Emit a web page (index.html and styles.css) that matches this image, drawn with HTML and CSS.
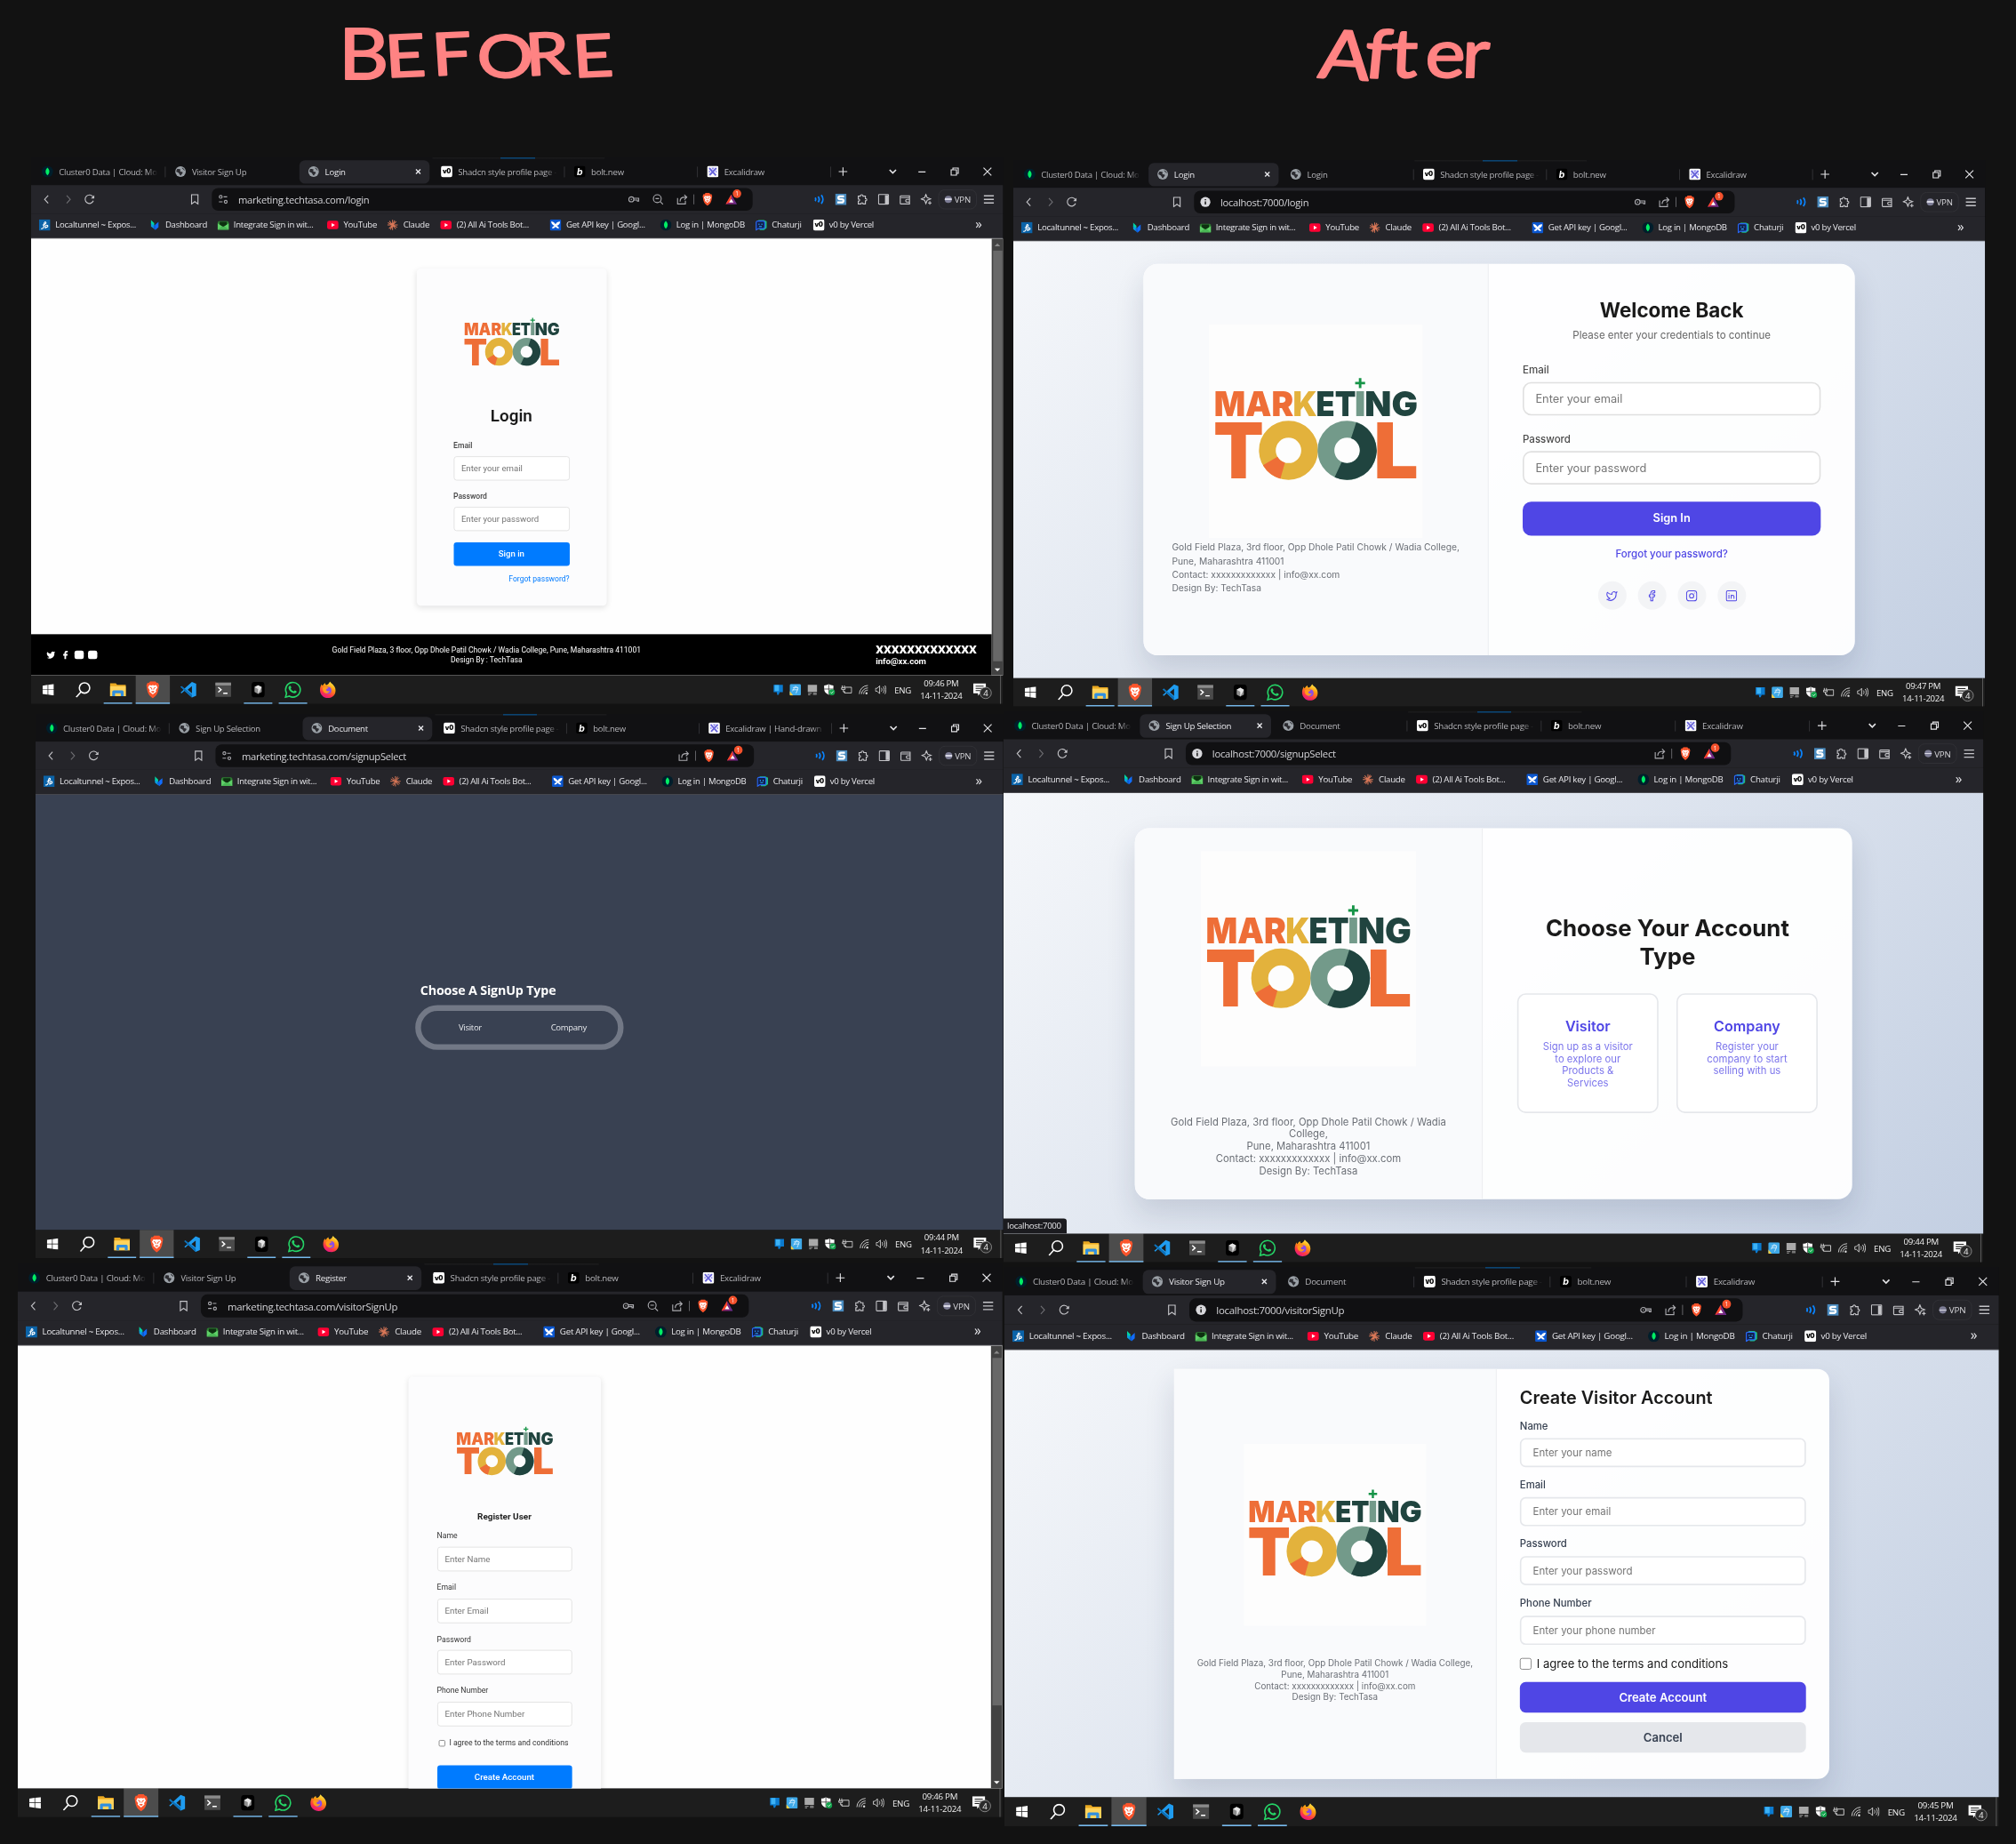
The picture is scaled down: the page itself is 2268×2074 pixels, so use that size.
FILE: index.html
```html
<!DOCTYPE html>
<html lang="en">
<head>
<meta charset="utf-8">
<title>Before / After</title>
<link rel="stylesheet" href="styles.css">
</head>
<body>
<svg class="sprite" aria-hidden="true">
  <defs>
    <linearGradient id="g-fox" x1=".8" y1="0" x2=".3" y2="1"><stop offset="0" stop-color="#fff44f"/><stop offset=".4" stop-color="#ff980e"/><stop offset=".75" stop-color="#ff3647"/><stop offset="1" stop-color="#e31587"/></linearGradient>
    <linearGradient id="g-tri" x1="0" y1="1" x2="1" y2="1"><stop offset="0" stop-color="#9e1f63"/><stop offset="1" stop-color="#662d91"/></linearGradient>
  </defs>
  <symbol id="mongo" viewBox="0 0 16 16"><circle cx="8" cy="8" r="8" fill="#001e2b"/><path d="M8 2.400c2 2 2.600 3.600 2.600 5.600S9.600 11.600 8 13.200C6.400 11.600 5.400 10 5.400 8S6 4.400 8 2.400z" fill="#00ed64"/></symbol>
  <symbol id="globe" viewBox="0 0 16 16"><circle cx="8" cy="8" r="7.400" fill="#9aa0a6"/><path d="M3 4.500c2-.5 3 .5 4.500 0 1 1.500-1 2.500.5 3.500 1.500.5 3 0 3 1.500S9 12 8.500 13.500C6.500 13 6.500 10.500 5 9.500S2 9 2 7.500zM10 2.500c0 1.500 1 2 2.500 3 .5 1.500 1 1 1.300 1-.5-2-2-3.500-3.800-4z" fill="#2b2b30"/></symbol>
  <symbol id="v0" viewBox="0 0 16 16"><rect width="16" height="16" rx="3" fill="#fff"/><text x="8" y="11" text-anchor="middle" class="mark" font-size="9" textLength="11.500" lengthAdjust="spacingAndGlyphs">v0</text></symbol>
  <symbol id="bolt" viewBox="0 0 16 16"><rect width="16" height="16" rx="3.500" fill="#000"/><text x="8" y="12.500" text-anchor="middle" class="mark mark-b" font-size="13">b</text></symbol>
  <symbol id="excali" viewBox="0 0 16 16"><rect width="16" height="16" rx="2.500" fill="#fff"/><path d="M3 3l9.500 10.500M13 3L3.500 13" stroke="#6965db" stroke-width="2.400"/><path d="M6 2.500h4.500L8 5.500zM2.500 6v4L5 8zM13.500 6v4L11 8z" fill="#8f8cf0"/></symbol>
  <symbol id="tunnel" viewBox="0 0 16 16"><rect width="16" height="16" fill="#0b63a8"/><path d="M3 13c2 1 4-1 4-4S8 2.500 9.500 4 8 8 5 8m4 5V9.500c0-1.500 3.500-2 3.500 0S10 11.500 9 11.500" fill="none" stroke="#fff" stroke-width="1.400"/></symbol>
  <symbol id="dash" viewBox="0 0 16 16"><path d="M2.500 1L7 5.500V10L2.500 7z" fill="#00d6a1"/><path d="M2.500 5.500L8 9.500 7.500 14 2.500 10z" fill="#0aa0e0"/><path d="M8.500 7.500l4.500-4V11L8.500 15z" fill="#116dff"/><path d="M6 9l3-1v7l-3-2.500z" fill="#0d5fd8"/></symbol>
  <symbol id="mail" viewBox="0 0 16 16"><path d="M0 4l2-1.500h12L16 4v10.500H0z" fill="#2e7d32"/><path d="M3 3.500h10v4L8 11 3 7.500z" fill="#0d3010"/><path d="M0 5.500L8 11l8-5.500v9H0z" fill="#5fd068"/><path d="M0 14.500l6-4.500h4l6 4.500z" fill="#49b654"/></symbol>
  <symbol id="yt" viewBox="0 0 16 16"><rect y="2" width="16" height="12" rx="3" fill="#ff0033"/><path d="M6.300 5.300L11 8l-4.700 2.700z" fill="#fff"/></symbol>
  <symbol id="claude" viewBox="0 0 16 16"><path d="M8 .8V15.200M.8 8H15.200M3.500 2.500L12.500 13.500M13 3L3 13M1.500 4.800L14.500 11.200M11 1.500L5 14.500" stroke="#d97757" stroke-width="1.250"/></symbol>
  <symbol id="api" viewBox="0 0 16 16"><rect width="16" height="16" rx="2" fill="#0b57d0"/><path d="M2 3c2 0 4 1.500 6 4 2-3 4-4 6.500-3.500C14 7 12 8.500 9.500 9c1.500 1 3 1.500 3.500 3.500C11 13 9 12 8 10c-1 2-2.500 3-5 2.500.5-1.500 1.500-2.500 3.500-3.300C3.500 8 2 6 2 3z" fill="#fff"/></symbol>
  <symbol id="chat" viewBox="0 0 16 16"><path d="M4 1h8l4 2v9l-4 3H6z" fill="#1bbf83"/><path d="M3 2.500h8a2 2 0 012 2V11a2 2 0 01-2 2H4l-3 2V4.500a2 2 0 012-2z" fill="#101f4d" stroke="#2a68f5" stroke-width="1.500"/><path d="M5 6v2M9 6v2M5 10h4" stroke="#2fa3f7" stroke-width="1.300"/></symbol>

  <symbol id="back" viewBox="0 0 16 16"><path d="M10 2.500L5 8l5 5.500" class="ln"/></symbol>
  <symbol id="fwd" viewBox="0 0 16 16"><path d="M6 2.500L11 8l-5 5.500" class="ln"/></symbol>
  <symbol id="reload" viewBox="0 0 16 16"><path d="M13.500 10A6 6 0 1113 4.500" class="ln"/><path d="M10 6.800h4.800V2.200z" fill="currentColor"/></symbol>
  <symbol id="bmark" viewBox="0 0 16 16"><path d="M3.500 1.500h9v13L8 11.200l-4.500 3.300z" class="ln"/></symbol>
  <symbol id="tune" viewBox="0 0 16 16"><circle cx="4.500" cy="4.500" r="2" class="ln"/><path d="M8.500 4.500h5M2 11.500h5" class="ln"/><circle cx="11.500" cy="11.500" r="2" class="ln"/></symbol>
  <symbol id="info" viewBox="0 0 16 16"><circle cx="8" cy="8" r="7" fill="#d8d8dc"/><path d="M8 7v4.500M8 4v1.600" stroke="#111" stroke-width="1.800"/></symbol>
  <symbol id="key" viewBox="0 0 16 16"><circle cx="4.500" cy="8" r="3.500" class="ln"/><circle cx="4.500" cy="8" r=".9" fill="currentColor"/><path d="M8 6.500h7v4h-2V9H8" class="ln"/></symbol>
  <symbol id="lens" viewBox="0 0 16 16"><circle cx="7" cy="7" r="5.500" class="ln"/><path d="M11 11l4 4M4.500 7h5" class="ln"/></symbol>
  <symbol id="share" viewBox="0 0 16 16"><path d="M1.500 6v8.500h11V10M5 11c0-4 2-6 6-6h3.500M11 1.500L14.500 5 11 8.500" class="ln"/></symbol>
  <symbol id="brave" viewBox="0 0 16 20"><path d="M3.500 2L5 0h6l1.500 2 1.700-.2L15.500 5l-.4 1.500c-.5 5-1.600 8.500-3.600 10.500L8 20l-3.500-3C2.500 15 1.400 11.500.900 6.500L.5 5l1.300-3.200z" fill="#fb542b"/><path d="M4 4.500l2.500.5L8 4.600l1.500.4 2.500-.5 1.500 3-2 3 .5 1.800-1.700 1.200L8 15.500l-2.300-2L4 12.300l.5-1.800-2-3z" fill="#fff"/><path d="M4.500 7.200l2 .7.500 2M11.500 7.200l-2 .7-.5 2M6.500 12h3L8 13.500z" stroke="#fb542b" stroke-width="1" fill="none"/></symbol>
  <symbol id="bat" viewBox="0 0 16 16"><path d="M8 1L0 15h16z" fill="url(#g-tri)"/><path d="M8 1L0 15l8-4.500z" fill="#ff4724"/><path d="M8 7.300L4.800 12.500h6.400z" fill="#fff"/></symbol>
  <symbol id="wave" viewBox="0 0 16 16"><path d="M2 5.500c1 1.500 1 3.500 0 5M6 4c2 2.500 2 5.500 0 8M10.500 2c3 3.500 3 8.500 0 12" fill="none" stroke="#0a84ff" stroke-width="2.300"/></symbol>
  <symbol id="sbox" viewBox="0 0 16 16"><rect width="16" height="16" fill="#4a8cc0"/><path d="M12.500 3.800H6.500a2 2 0 000 4h3a2.200 2.200 0 010 4.400H3" fill="none" stroke="#fff" stroke-width="2.900"/></symbol>
  <symbol id="puzzle" viewBox="0 0 16 16"><path d="M2.500 3.500h3c-.5-2.800 4-2.800 3.500 0h3.500V7c2.500-.5 2.500 3.500 0 3v4.500h-3.300c.2-2.300-3-2.300-2.800 0H2.500V10.500c2.500.3 2.500-3.500 0-3z" class="ln"/></symbol>
  <symbol id="panel" viewBox="0 0 16 16"><rect x="1" y="1.200" width="14" height="13.600" rx="1" class="ln"/><path d="M10 2h4.500v12H10z" fill="currentColor"/></symbol>
  <symbol id="wallet" viewBox="0 0 16 16"><path d="M14.500 5.500V3H2.500A1 1 0 001.500 4v9.500a1 1 0 001 1h12V5.500h-12M14.500 8H11a1.800 1.800 0 000 3.800h3.500" class="ln"/></symbol>
  <symbol id="spark" viewBox="0 0 16 16"><path d="M7.500 1l1.800 4.700L14 7.500 9.300 9.300 7.500 14 5.700 9.300 1 7.500l4.700-1.800z" class="ln"/><path d="M13 10.500v5M10.500 13h5" class="ln"/></symbol>
  <symbol id="menu" viewBox="0 0 16 16"><path d="M1 3h14M1 8h14M1 13h14" stroke="currentColor" stroke-width="1.700"/></symbol>
  <symbol id="x" viewBox="0 0 16 16"><path d="M2.500 2.500l11 11M13.500 2.500l-11 11" class="ln"/></symbol>
  <symbol id="xs" viewBox="0 0 16 16"><path d="M3 3l10 10M13 3L3 13" fill="none" stroke="currentColor" stroke-width="2.800"/></symbol>
  <symbol id="plus" viewBox="0 0 16 16"><path d="M8 2v12M2 8h12" class="ln"/></symbol>
  <symbol id="chev" viewBox="0 0 16 16"><path d="M3.500 5.500L8 10l4.500-4.500" fill="none" stroke="currentColor" stroke-width="2"/></symbol>
  <symbol id="min" viewBox="0 0 16 16"><path d="M3 8.500h10" class="ln"/></symbol>
  <symbol id="restore" viewBox="0 0 16 16"><path d="M3 5.500h7.500V13H3zM5.500 5.500V3H13v7.500h-2.500" class="ln"/></symbol>

  <symbol id="win" viewBox="0 0 16 16"><path d="M0 2.200l7.200-1v6.400H0zM8.100 1.100L16 0v7.600H8.100zM0 8.400h7.200v6.400l-7.200-1zM8.100 8.400H16V16l-7.900-1.100z" fill="#fff"/></symbol>
  <symbol id="search" viewBox="0 0 16 16"><circle cx="9.500" cy="6.200" r="5.300" fill="none" stroke="#fff" stroke-width="1.400"/><path d="M6 10l-5 5.600" stroke="#fff" stroke-width="1.400"/></symbol>
  <symbol id="folder" viewBox="0 0 24 24"><path d="M1 3h8l2 2h12v16H1z" fill="#e9a820"/><path d="M1 7h22v14H1z" fill="#ffd35c"/><path d="M4 21v-6a2 2 0 012-2h12a2 2 0 012 2v6h-4v-4H8v4z" fill="#2f8fe0"/></symbol>
  <symbol id="code" viewBox="0 0 24 24"><path d="M17 1l6 2.500v17L17 23 6.500 13.500 2.500 17 1 16l4.500-4L1 8l1.500-1 4 3.500zM17 7l-6 5 6 5z" fill="#1f9cf0" fill-rule="evenodd"/><path d="M1 8l1.500-1L17 18.500V23L6.500 13.500z" fill="#0b6fb8"/></symbol>
  <symbol id="term" viewBox="0 0 24 24"><path d="M1 2h22v20H1z" fill="#4b4b4b"/><path d="M1 2h22v4H1z" fill="#8b8b8b"/><path d="M5 8.500l4 3.500-4 3.500M12 17h6" fill="none" stroke="#fff" stroke-width="1.800"/></symbol>
  <symbol id="cube" viewBox="0 0 20 24"><rect width="20" height="24" rx="5" fill="#000"/><path d="M10 5l5.500 3v7.500L10 18.500l-5.500-3V8z" fill="#8e8e8e"/><path d="M4.500 8L10 5l5.500 3-5.500 10.500V11z" fill="#e6e6e6"/></symbol>
  <symbol id="wa" viewBox="0 0 24 24"><path d="M1.500 22.500L3 17A10.300 10.300 0 117 21z" fill="none" stroke="#25d366" stroke-width="2"/><path d="M8 6.500c1 0 1.200 1.500 1.600 2.500.2.700-1 1.300-.7 1.800 1 1.700 2.200 2.800 4 3.500.6.200 1.200-1.500 1.800-1.300l2.400 1.300c.3 2-1.800 3-3.500 2.700-4-1-6.800-3.600-7.800-7C5.500 8.300 6.500 6.500 8 6.500z" fill="#25d366"/></symbol>
  <symbol id="fox" viewBox="0 0 24 24"><path d="M15 .5c1 2 3 3 4.500 4.500 3 3 4 7 3 11-1.500 5-5.500 7.500-10.500 7.500C6 23.500 1 19 1 12.500 1 9 2 6.500 3.500 4c0 1.500.5 2 1 2.500C5.500 5 7 3 8.500 2.500 8.300 4 9 5 10 5.500c2-.5 3.500-2 5-5z" fill="url(#g-fox)"/><circle cx="12" cy="13" r="5" fill="#8a4be8"/><path d="M5 9c3-2 6 0 8 0-1 2-3 1.500-3.500 3 .5 2.500 3 2.500 5 1.500-1 3.500-5 4.500-7.500 2.500S4.500 11 5 9z" fill="#ff9a1c"/></symbol>
  <symbol id="t1" viewBox="0 0 16 16"><path d="M1.500 1h13v10.500H10L8.500 15h-2L6 11.500H1.500z" fill="#0b7bd0"/><path d="M3 1.500h6V10H3z" fill="#3db2f5"/></symbol>
  <symbol id="t2" viewBox="0 0 16 16"><rect width="16" height="16" rx="2" fill="#3fa9e8"/><path d="M4 10l4-7 4 2.500L9 13M4.500 5H12M4 8h8" stroke="#d9f0ff" fill="none"/><path d="M0 10l5 6H1a1 1 0 01-1-1z" fill="#ffcf3d"/></symbol>
  <symbol id="t3" viewBox="0 0 16 16"><path d="M1.500 1h13v10H1.500z" fill="#a9a9a9"/><path d="M2 13h5M9 14.500h5M2 15h3" stroke="#bbb"/><path d="M9 12h5v2.500H9z" fill="#777"/></symbol>
  <symbol id="t4" viewBox="0 0 16 16"><path d="M7 0c2 1.500 4 2 6.500 2v5c0 4-3 6.500-6.500 8C3.500 13.500.500 11 .5 7V2C3 2 5 1.500 7 0z" fill="#fff"/><path d="M7 0v15M0 7h14" stroke="#333" stroke-width="1"/><circle cx="11.500" cy="11.500" r="4.300" fill="#14a44d"/><path d="M9.500 11.500l1.500 1.500 2.500-2.800" stroke="#fff" fill="none"/></symbol>
  <symbol id="t5" viewBox="0 0 16 16"><path d="M6 4.500h9v8H5V10M2 2v3M5 2v3M1 5h5v2.500H1zM3.500 8v3H6" class="lt"/></symbol>
  <symbol id="t6" viewBox="0 0 16 16"><path d="M2 14A12 12 0 0114 2M5 14a9 9 0 019-8.500M8 14a6 6 0 016-5.500" class="lt"/><circle cx="12" cy="13" r="1.500" fill="#ddd"/></symbol>
  <symbol id="t7" viewBox="0 0 16 16"><path d="M.7 6v4H3l3.500 3.500v-11L3 6zM9 5.500c1 1.500 1 3.500 0 5M11.500 3.500c2 2.500 2 6.500 0 9M14 2c2 3.500 2 8.500 0 12" class="lt"/></symbol>
  <symbol id="note" viewBox="0 0 16 16"><path d="M0 0h16v12.500H8.500L6 15.500v-3H0z" fill="#fff"/><path d="M3 3.500h10M3 6.300h10M3 9h6" stroke="#222" stroke-width="1.200"/></symbol>

  <symbol id="twitter" viewBox="0 0 24 24"><path d="M22 4s-.7 2.100-2 3.400c1.600 10-9.400 17.300-18 11.600 2.200.1 4.400-.6 6-2C3 15.500.5 9.600 3 5c2.200 2.600 5.600 4.100 9 4-.9-4.200 4-6.600 7-3.800 1.100 0 3-1.200 3-1.200z"/></symbol>
  <symbol id="facebook" viewBox="0 0 24 24"><path d="M18 2h-3a5 5 0 00-5 5v3H7v4h3v8h4v-8h3l1-4h-4V7a1 1 0 011-1h3z"/></symbol>
  <symbol id="instagram" viewBox="0 0 24 24"><rect x="2" y="2" width="20" height="20" rx="5"/><circle cx="12" cy="12" r="4.200"/><path d="M17.500 6.500h.01"/></symbol>
  <symbol id="linkedin" viewBox="0 0 24 24"><rect x="2" y="2" width="20" height="20" rx="2.500"/><path d="M7 10.500V17M7 7v.01M11.500 17v-6.500M11.500 13.500c0-3.500 5.500-4 5.500 0V17"/></symbol>

  <symbol id="logo" viewBox="0 0 300 300">
    <g class="logo-text" font-size="48.500">
      <text x="7" y="128.300" fill="#ee6e37" textLength="112" lengthAdjust="spacingAndGlyphs">MAR</text>
      <text x="118" y="128.300" fill="#e3b23c" textLength="34" lengthAdjust="spacingAndGlyphs">K</text>
      <text x="150.500" y="128.300" fill="#20443f" textLength="56" lengthAdjust="spacingAndGlyphs">ET</text>
      <text x="204.500" y="128.300" fill="#739a8a" textLength="16" lengthAdjust="spacingAndGlyphs">I</text>
      <text x="219" y="128.300" fill="#20443f" textLength="74.500" lengthAdjust="spacingAndGlyphs">NG</text>
    </g>
    <path d="M212.500 75.500v14M205.500 82.500h14" stroke="#169447" stroke-width="3.600"/>
    <g class="logo-text" font-size="109" fill="#ee6e37">
      <text x="6" y="216.700" textLength="71" lengthAdjust="spacingAndGlyphs">T</text>
      <text x="231.500" y="216.700" textLength="63" lengthAdjust="spacingAndGlyphs">L</text>
    </g>
    <g fill="none" stroke-width="23.600">
      <circle cx="111.800" cy="177" r="29.700" stroke="#e3b23c"/>
      <path d="M86.100 191.900A29.700 29.700 0 00103.600 205.500" stroke="#ee6e37"/>
      <circle cx="194.200" cy="177" r="29.700" stroke="#739a8a"/>
      <path d="M203.400 148.760A29.700 29.700 0 11181.650 203.920" stroke="#20443f"/>
    </g>
  </symbol>
</svg>

<main class="board">
  <h1 class="caption caption-before"><svg viewBox="0 0 330 90"><text class="big" transform="scale(1.080 1)" x="3" y="79">B</text><text transform="scale(1.200 1)" x="47 91 131.500 178.500 223" y="77 75 76 75 77" rotate="-3 -3 2 -3 -3">EFORE</text></svg></h1>
  <h1 class="caption caption-after"><svg viewBox="0 0 220 90"><text transform="scale(1.120 1) skewX(-2)" x="6 52 79 114 151" y="77" rotate="4 3 0 0 0">After</text></svg></h1>

  <section class="window w1" data-tabs="Visitor Sign Up|*Login" data-url="marketing.techtasa.com/login" data-icons="key lens" data-time="09:46 PM">
    <div class="page page-white">
      <div class="scroll-body">
        <div class="old-card">
          <svg class="old-logo"><use href="#logo"/></svg>
          <h2>Login</h2>
          <label>Email</label><div class="field">Enter your email</div>
          <label>Password</label><div class="field">Enter your password</div>
          <div class="btn">Sign in</div>
          <a>Forgot password?</a>
        </div>
        <footer>
          <div class="foot-social">
            <svg viewBox="0 0 24 24" fill="#fff"><use href="#twitter"/></svg>
            <svg viewBox="0 0 24 24" fill="#fff"><use href="#facebook"/></svg>
            <i></i><i></i>
          </div>
          <p>Gold Field Plaza, 3 floor, Opp Dhole Patil Chowk / Wadia College, Pune, Maharashtra 411001<br>Design By : TechTasa</p>
          <div class="foot-contact"><b>XXXXXXXXXXXXX</b><span>info@xx.com</span></div>
        </footer>
      </div>
      <div class="scrollbar"><i class="up"></i><span class="thumb"></span><i class="down"></i></div>
    </div>
  </section>

  <section class="window w2" data-tabs="*Login|Login" data-url="localhost:7000/login" data-local data-icons="key" data-time="09:47 PM">
    <div class="page page-grad">
      <div class="card card-login">
        <div class="side">
          <svg class="logo"><use href="#logo"/></svg>
          <p>Gold Field Plaza, 3rd floor, Opp Dhole Patil Chowk / Wadia College,<br>Pune, Maharashtra 411001<br>Contact: xxxxxxxxxxxxx | info@xx.com<br>Design By: TechTasa</p>
        </div>
        <div class="main">
          <h2>Welcome Back</h2>
          <p class="sub">Please enter your credentials to continue</p>
          <label>Email</label><div class="field">Enter your email</div>
          <label>Password</label><div class="field">Enter your password</div>
          <div class="btn">Sign In</div>
          <a>Forgot your password?</a>
          <div class="social">
            <span><svg><use href="#twitter"/></svg></span>
            <span><svg><use href="#facebook"/></svg></span>
            <span><svg><use href="#instagram"/></svg></span>
            <span><svg><use href="#linkedin"/></svg></span>
          </div>
        </div>
      </div>
    </div>
  </section>

  <section class="window w3" data-tabs="Sign Up Selection|*Document" data-last="Excalidraw | Hand-drawn l" data-url="marketing.techtasa.com/signupSelect" data-icons="" data-time="09:44 PM">
    <div class="page page-slate">
      <div class="choice">
        <h2>Choose A SignUp Type</h2>
        <div class="pill"><span>Visitor</span><span>Company</span></div>
      </div>
    </div>
  </section>

  <section class="window w4" data-tabs="*Sign Up Selection|Document" data-url="localhost:7000/signupSelect" data-local data-icons="" data-time="09:44 PM">
    <div class="page page-grad">
      <div class="card card-select">
        <div class="side">
          <svg class="logo"><use href="#logo"/></svg>
          <p>Gold Field Plaza, 3rd floor, Opp Dhole Patil Chowk / Wadia College,<br>Pune, Maharashtra 411001<br>Contact: xxxxxxxxxxxxx | info@xx.com<br>Design By: TechTasa</p>
        </div>
        <div class="main">
          <h2>Choose Your Account Type</h2>
          <div class="options">
            <div class="option"><h3>Visitor</h3><p>Sign up as a visitor to explore our Products &amp; Services</p></div>
            <div class="option"><h3>Company</h3><p>Register your company to start selling with us</p></div>
          </div>
        </div>
      </div>
      <div class="status">localhost:7000</div>
    </div>
  </section>

  <section class="window w5" data-tabs="Visitor Sign Up|*Register" data-url="marketing.techtasa.com/visitorSignUp" data-icons="key lens" data-time="09:46 PM">
    <div class="page page-white">
      <div class="scroll-body">
        <div class="old-card old-register">
          <svg class="old-logo"><use href="#logo"/></svg>
          <h2>Register User</h2>
          <label>Name</label><div class="field">Enter Name</div>
          <label>Email</label><div class="field">Enter Email</div>
          <label>Password</label><div class="field">Enter Password</div>
          <label>Phone Number</label><div class="field">Enter Phone Number</div>
          <div class="agree"><i></i>I agree to the terms and conditions</div>
          <div class="btn">Create Account</div>
        </div>
      </div>
      <div class="scrollbar"><i class="up"></i><span class="thumb"></span><i class="down"></i></div>
    </div>
  </section>

  <section class="window w6" data-tabs="*Visitor Sign Up|Document" data-url="localhost:7000/visitorSignUp" data-local data-icons="key" data-time="09:45 PM">
    <div class="page page-grad">
      <div class="card card-register">
        <div class="side">
          <svg class="logo"><use href="#logo"/></svg>
          <p>Gold Field Plaza, 3rd floor, Opp Dhole Patil Chowk / Wadia College,<br>Pune, Maharashtra 411001<br>Contact: xxxxxxxxxxxxx | info@xx.com<br>Design By: TechTasa</p>
        </div>
        <div class="main">
          <h2>Create Visitor Account</h2>
          <label>Name</label><div class="field">Enter your name</div>
          <label>Email</label><div class="field">Enter your email</div>
          <label>Password</label><div class="field">Enter your password</div>
          <label>Phone Number</label><div class="field">Enter your phone number</div>
          <div class="agree"><i></i>I agree to the terms and conditions</div>
          <div class="btn">Create Account</div>
          <div class="btn btn-cancel">Cancel</div>
        </div>
      </div>
    </div>
  </section>
</main>
<script src="app.js"></script>
</body>
</html>
```
FILE: styles.css
```css
* { box-sizing: border-box; }
body { margin: 0; background: #121212; }
h1, h2, h3, p { margin: 0; }
.sprite { position: absolute; width: 0; height: 0; }
.board { position: relative; width: 2268px; height: 2074px; overflow: hidden; background: #121212; }

/* captions */
.caption { position: absolute; top: 10px; }
.caption svg { display: block; height: 90px; overflow: visible; }
.caption text { font: 400 66px Lato, sans-serif; fill: #ff8383; stroke: #ff8383; stroke-width: 2px; stroke-linejoin: round; }
.caption .big { font-size: 80px; }
.caption-before { left: 378px; }
.caption-before svg { width: 330px; }
.caption-after { left: 1478px; }
.caption-after svg { width: 220px; }
.caption-after text { font-size: 76px; }

/* browser window */
.window { position: absolute; width: 1366px; height: 768px; display: flex; flex-direction: column; transform-origin: 0 0; background: #111113; font-family: "Open Sans", "Noto Sans", sans-serif; color: #e4e4e7; overflow: hidden; }
.w1 { left: 34.700px; top: 176.900px; transform: scale(.8005); }
.w2 { left: 1139.800px; top: 180px; transform: scale(.8003); }
.w3 { left: 39.700px; top: 803px; transform: scale(.797); }
.w4 { left: 1128.700px; top: 800.300px; transform: scale(.807); }
.w5 { left: 19.700px; top: 1420.500px; transform: scale(.811); }
.w6 { left: 1129.700px; top: 1425.300px; transform: scale(.819); }

.ln { fill: none; stroke: currentColor; stroke-width: 1.4; }
.lt { fill: none; stroke: #ddd; stroke-width: 1.1; }
.mark { font-family: Inter, sans-serif; font-weight: 900; fill: #000; }
.mark-b { fill: #fff; font-style: italic; font-weight: 700; }
.logo-text { font-family: Inter, sans-serif; font-weight: 900; }
.ic { width: 16px; height: 16px; flex: none; display: block; overflow: visible; }

.tabstrip { position: relative; flex: none; height: 39px; display: flex; align-items: center; padding: 1px 0 0 3px; font-size: 12px; letter-spacing: -.3px; }
.loading { position: absolute; left: 564px; top: 0; width: 242px; height: 2px; background: linear-gradient(90deg, #1a1a1b 0 96px, #0c4471 96px 144px, #1a1a1b 144px); }
.tab { position: relative; flex: none; width: 183px; height: 33px; margin-right: 4px; padding: 0 8px 0 12px; display: flex; align-items: center; gap: 8px; color: #b4b4b8; border-radius: 8px; }
.tab span { flex: 1; white-space: nowrap; overflow: hidden; -webkit-mask-image: linear-gradient(90deg, #000 88%, transparent); mask-image: linear-gradient(90deg, #000 88%, transparent); }
.tab.active { background: #25252a; color: #e8e8ec; }
.tab.active .ic:last-child { width: 10px; height: 10px; margin-right: 3px; }
.tab.sep::after { content: ""; position: absolute; right: -3px; top: 9px; width: 1px; height: 15px; background: #3a3a3e; }
.tab-new { margin-left: 8px; }
.controls { margin-left: auto; display: flex; align-items: center; gap: 30px; padding-right: 14px; }
.controls .ic:first-child { margin-right: -5px; }

.toolbar { flex: none; height: 40px; display: flex; align-items: center; background: #25252a; color: #c4c4c8; }
.nav { width: 254px; display: flex; align-items: center; gap: 14px; padding: 0 16px 0 14px; }
.nav .ic:nth-child(2) { opacity: .45; }
.nav .ic:last-child { margin-left: auto; }
.url { width: 760px; height: 32px; display: flex; align-items: center; padding: 0 22px 0 8px; border-radius: 9px; background: #101012; color: #a9a9ae; }
.url .addr { margin-left: 13px; font-size: 14px; letter-spacing: -.35px; color: #d4d4d8; white-space: nowrap; }
.url .spacer { flex: 1; }
.url .act { margin-right: 18px; }
.url .share { margin-right: 8px; }
.divider { width: 1px; height: 14px; background: #77777c; margin-right: 11px; }
.url .shield { width: 15px; height: 18px; margin-right: 18px; }
.rewards { position: relative; }
.rewards b { position: absolute; left: 10px; top: -6px; width: 12px; height: 12px; border-radius: 50%; background: #f4512c; color: #fff; font: 8px/12px "Open Sans", sans-serif; text-align: center; }
.ext { margin-left: auto; display: flex; align-items: center; gap: 14px; padding-right: 12px; }
.vpn { margin: 0 -5px; width: 54px; height: 28px; border: 1px solid #333338; border-radius: 9px; display: flex; align-items: center; justify-content: center; gap: 4px; font-size: 12px; letter-spacing: -.2px; color: #d4d4d8; }
.vpn i { width: 10px; height: 10px; border-radius: 50%; background: linear-gradient(#7d7d95 0 4px, #d9d9e6 4px 6px, #7d7d95 6px); }

.bookmarks { flex: none; height: 35px; display: flex; align-items: center; padding: 0 30px 3px 11px; background: #25252a; border-bottom: 1px solid #55555a; font-size: 12px; letter-spacing: -.33px; color: #e6e6ea; }
.bookmarks div { flex: none; display: flex; align-items: center; gap: 7px; white-space: nowrap; }
.bookmarks .more { margin-left: auto; font-size: 19px; line-height: 20px; padding-bottom: 3px; }

.taskbar { flex: none; height: 40px; display: flex; align-items: stretch; background: #1d1d1d; color: #eee; }
.app { width: 48px; margin-right: 1.150px; display: flex; align-items: center; justify-content: center; }
.app .ic { width: 24px; height: 24px; }
.app.small .ic { width: 16px; height: 16px; }
.app.mid .ic { width: 22px; height: 22px; }
.app.open { background: linear-gradient(#76b9ed, #76b9ed) center bottom / 40px 2px no-repeat; }
.app.focus { background: linear-gradient(#76b9ed, #76b9ed) center bottom / 48px 2px no-repeat #4c4c4c; }
.tray { margin-left: auto; display: flex; align-items: center; gap: 8px; font-size: 12px; letter-spacing: -.3px; }
.tray .lang { width: 28px; text-align: center; margin-left: 1px; }
.tray .clock { width: 72px; text-align: center; line-height: 18px; letter-spacing: -.35px; margin: 0 1px 0 -4px; }
.note { position: relative; width: 26px; height: 18px; }
.note .ic { width: 18px; height: 18px; }
.note b { position: absolute; left: 9px; top: 5px; width: 17px; height: 17px; border-radius: 50%; border: 1px solid #999; background: #2b2b2b; font: 12px/15px "Open Sans", sans-serif; text-align: center; }
.desk { align-self: stretch; width: 4px; margin-left: 4px; border-left: 1px solid #6a6a6a; }

/* page areas */
.page { position: relative; flex: 1; min-height: 0; display: flex; overflow: hidden; }
.page-white { background: #fefefe; }
.page-grad { background: linear-gradient(135deg, #f5f7fa 0%, #c3cfe2 100%); align-items: center; justify-content: center; font-family: Inter, sans-serif; }
.page-slate { background: #394152; }
.scroll-body { flex: 1; min-width: 0; display: flex; flex-direction: column; align-items: center; font-family: Roboto, sans-serif; }
.scrollbar { width: 16px; display: flex; flex-direction: column; align-items: center; background: #424242; }
.scrollbar i { width: 0; height: 0; border: 4px solid transparent; }
.scrollbar .up { border-bottom-color: #8a8a8a; margin: 3px 0 6px; }
.scrollbar .down { border-top-color: #fff; margin: auto 0 2px; }
.thumb { width: 13px; height: 577px; background: #686868; }
.w5 .thumb { height: 482px; }

/* original pages */
.old-card { flex: none; width: 267px; height: 474px; margin-top: 42px; padding: 34px 52px 0; display: flex; flex-direction: column; background: #fcfcfd; border-radius: 6px; box-shadow: 0 3px 8px rgba(0, 0, 0, .1); color: #333; }
.old-logo { width: 141px; height: 141px; align-self: center; flex: none; }
.old-card h2 { text-align: center; font-size: 23.500px; font-weight: 600; line-height: 28px; color: #1a1a1a; margin: 18px 0 21px; }
.old-card label { font-size: 10.700px; font-weight: 500; line-height: 14px; color: #444; }
.old-card .field { flex: none; height: 34px; margin: 7.500px 0 16px; padding-left: 10px; border: 1px solid #ddd; border-radius: 4px; background: #fff; font-size: 12px; line-height: 32px; color: #757575; }
.old-card .btn { flex: none; height: 33px; border-radius: 4px; background: #007bff; color: #fff; font-size: 12px; font-weight: 500; line-height: 33px; text-align: center; }
.old-card a { align-self: flex-end; margin-top: 12px; font-size: 10.700px; line-height: 13px; color: #007bff; }
.old-register { height: 620px; padding: 34px 40px 0; margin-top: 43px; }
.old-register h2 { font-size: 12.300px; font-weight: 700; line-height: 16px; margin: 11px 0 12px; color: #222; }
.old-register label { font-weight: 400; color: #333; }
.old-register .field { margin: 7.800px 0 16px; }
.old-register .agree { display: flex; align-items: center; gap: 6px; padding-left: 2px; font-size: 10.700px; line-height: 14px; color: #333; white-space: nowrap; margin: 0 0 24px; }
.old-register .agree i { width: 9px; height: 9px; border: 1px solid #777; border-radius: 2px; background: #fff; }
footer { flex: none; align-self: stretch; height: 58px; margin-top: 40px; padding: 0 21px; display: flex; justify-content: space-between; align-items: center; background: #000; color: #fff; }
footer p { font-size: 10.700px; line-height: 13px; text-align: center; }
.foot-social { display: flex; align-items: center; gap: 6px; }
.foot-social svg { width: 14px; height: 14px; }
.foot-social i { width: 13px; height: 12px; border-radius: 3px; background: #fff; }
.foot-contact { width: 142px; font-size: 12px; font-weight: 700; line-height: 17px; }
.foot-contact b, .foot-contact span { display: block; }
.foot-contact b { font-size: 17.100px; line-height: 18px; }

.choice { margin: 266px 0 0 536px; }
.choice h2 { padding-left: 7px; font-size: 17.900px; line-height: 21px; letter-spacing: -.2px; color: #fff; white-space: nowrap; }
.pill { width: 294px; height: 63px; margin-top: 10px; border: 8px solid #727886; border-radius: 32px; display: flex; align-items: center; justify-content: space-around; font-size: 12px; letter-spacing: -.4px; }
.pill span { width: 139px; text-align: center; color: #e5e7eb; }

/* redesigned pages */
.card { width: 1000px; display: flex; border-radius: 20px; overflow: hidden; background: rgba(255, 255, 255, .95); box-shadow: 0 20px 40px rgba(31, 45, 80, .14); color: #1a1a1a; }
.side { flex: none; display: flex; flex-direction: column; align-items: center; justify-content: center; background: #f9fafc; border-right: 1px solid #e8eaee; color: #6b6f76; }
.logo { width: 300px; height: 300px; background: #fdfdfd; flex: none; }
.main { flex: 1; display: flex; flex-direction: column; justify-content: center; }
.field { background: #fff; color: #757575; white-space: nowrap; }
.main .btn { background: #4f46e5; color: #fff; font-weight: 600; text-align: center; }

.card-login { height: 550px; }
.card-login .side { width: 485px; }
.card-login .side p { align-self: stretch; padding-left: 40px; margin-top: 4px; font-size: 12.800px; line-height: 19.200px; white-space: nowrap; }
.card-login .main { padding: 0 48px 16px; }
.card-login h2 { font-size: 28px; font-weight: 700; line-height: 35px; text-align: center; }
.card-login .sub { margin: 8px 0 32px; font-size: 14.400px; line-height: 17px; text-align: center; color: #666; }
.card-login label { font-size: 14.400px; font-weight: 500; line-height: 17px; color: #4a4a4a; }
.card-login .field { height: 47.500px; margin: 8.500px 0 24px; padding-left: 16px; border: 2px solid #e0e0e0; border-radius: 12px; font-size: 16px; line-height: 43.500px; }
.card-login .btn { height: 47.500px; border-radius: 12px; font-size: 16px; line-height: 47.500px; }
.card-login a { margin-top: 16.500px; text-align: center; font-size: 14.400px; font-weight: 500; line-height: 17px; color: #4f46e5; }
.social { display: flex; justify-content: center; gap: 16px; margin-top: 31px; }
.social span { width: 40px; height: 40px; border-radius: 50%; background: #f3f4f6; display: flex; align-items: center; justify-content: center; }
.social svg { width: 17px; height: 17px; fill: none; stroke: #4f46e5; stroke-width: 1.8; stroke-linecap: round; stroke-linejoin: round; }

.card-select { height: 517px; }
.card-select .side { width: 485px; padding: 32px 40px; justify-content: space-between; }
.card-select .side p { font-size: 14px; line-height: 17px; text-align: center; }
.card-select .main { padding: 0 48px; text-align: center; }
.card-select h2 { font-size: 32px; font-weight: 700; line-height: 39px; margin-bottom: 32px; }
.options { display: grid; grid-template-columns: 1fr 1fr; gap: 25px; }
.option { padding: 32px 30px; border: 2px solid #e5e7eb; border-radius: 12px; background: #fff; color: #4f46e5; }
.option h3 { font-size: 20px; font-weight: 600; line-height: 24px; margin-bottom: 7px; }
.option p { font-size: 14px; line-height: 17px; opacity: .75; }
.status { position: absolute; left: 0; bottom: 0; width: 88px; height: 21px; padding-left: 5px; background: #1b1b1f; border-radius: 0 4px 0 0; font: 12px/20px "Open Sans", sans-serif; letter-spacing: -.4px; }

.card-register { width: 900px; height: 563px; border-radius: 0 16px 16px 0; }
.card-register .side { width: 443px; }
.card-register .logo { width: 250px; height: 250px; }
.card-register .side p { margin-top: 43px; font-size: 12px; line-height: 15.700px; text-align: center; white-space: nowrap; }
.card-register .main { padding: 0 32px 10.600px; }
.card-register h2 { font-size: 24.200px; font-weight: 600; line-height: 29px; margin-bottom: 16px; }
.card-register label { font-size: 13.800px; font-weight: 500; line-height: 17px; color: #374151; }
.card-register .field { height: 40px; margin: 8px 0 16.300px; padding-left: 16px; border: 2px solid #e5e7eb; border-radius: 8px; font-size: 14px; line-height: 36px; }
.card-register .agree { display: flex; align-items: center; gap: 7px; margin: 0 0 15px; font-size: 16px; line-height: 20px; white-space: nowrap; }
.card-register .agree i { width: 16px; height: 16px; border: 1px solid #767676; border-radius: 3px; background: #fff; }
.card-register .btn { height: 42px; border-radius: 8px; font-size: 16px; line-height: 42px; }
.card-register .btn-cancel { margin-top: 12.500px; background: #e5e7eb; color: #374151; }
```
FILE: app.js
```js
// Adds the shared browser chrome and taskbar around each window's page.
const icon = (id, cls = "") => `<svg class="ic ${cls}"><use href="#${id}"/></svg>`;

const BOOKMARKS = [
  ["tunnel", "Localtunnel ~ Expos...", 154.5], ["dash", "Dashboard", 96], ["mail", "Integrate Sign in wit...", 154.5],
  ["yt", "YouTube", 84], ["claude", "Claude", 75], ["yt", "(2) All Ai Tools Bot...", 154],
  ["api", "Get API key | Googl...", 154.5], ["mongo", "Log in | MongoDB", 134.5],
  ["chat", "Chaturji", 80.5], ["v0", "v0 by Vercel", 90],
];
const APPS = [
  ["win", "small"], ["search", "mid"], ["folder", "open"], ["brave", "focus"], ["code", ""],
  ["term", ""], ["cube", "open mid"], ["wa", "open"], ["fox", ""],
];

function tabs(win) {
  const own = win.dataset.tabs.split("|").map(t => ({ icon: "globe", active: t[0] === "*", title: t.replace("*", "") }));
  const list = [
    { icon: "mongo", title: "Cluster0 Data | Cloud: Mon" }, ...own,
    { icon: "v0", title: "Shadcn style profile page -" }, { icon: "bolt", title: "bolt.new" },
    { icon: "excali", title: win.dataset.last || "Excalidraw" },
  ];
  return list.map((t, i) => {
    const sep = !t.active && !(list[i + 1] && list[i + 1].active);
    return `<div class="tab ${t.active ? "active" : ""} ${sep ? "sep" : ""}">${icon(t.icon)}<span>${t.title}</span>${t.active ? icon("xs") : ""}</div>`;
  }).join("");
}

document.querySelectorAll(".window").forEach(win => {
  const d = win.dataset;
  const actions = d.icons.split(" ").filter(Boolean).map(i => icon(i, "act")).join("");
  win.insertAdjacentHTML("afterbegin", `
    <div class="tabstrip"><div class="loading"></div>${tabs(win)}${icon("plus", "tab-new")}
      <div class="controls">${icon("chev")}${icon("min")}${icon("restore")}${icon("x")}</div></div>
    <div class="toolbar">
      <div class="nav">${icon("back")}${icon("fwd")}${icon("reload")}${icon("bmark")}</div>
      <div class="url">${icon("local" in d ? "info" : "tune")}<span class="addr">${d.url}</span><span class="spacer"></span>
        ${actions}${icon("share", "share")}<span class="divider"></span>${icon("brave", "shield")}<span class="rewards">${icon("bat")}<b>1</b></span></div>
      <div class="ext">${["wave", "sbox", "puzzle", "panel", "wallet", "spark"].map(i => icon(i)).join("")}
        <span class="vpn"><i></i>VPN</span>${icon("menu")}</div>
    </div>
    <div class="bookmarks">${BOOKMARKS.map(([i, t, w]) => `<div style="width:${w}px">${icon(i)}${t}</div>`).join("")}<span class="more">»</span></div>`);
  win.insertAdjacentHTML("beforeend", `
    <div class="taskbar">${APPS.map(([i, c]) => `<div class="app ${c}">${icon(i)}</div>`).join("")}
      <div class="tray">${["t1", "t2", "t3", "t4", "t5", "t6", "t7"].map(i => icon(i)).join("")}
        <span class="lang">ENG</span><span class="clock">${d.time}<br>14-11-2024</span>
        <span class="note">${icon("note")}<b>4</b></span><span class="desk"></span></div></div>`);
});
```
